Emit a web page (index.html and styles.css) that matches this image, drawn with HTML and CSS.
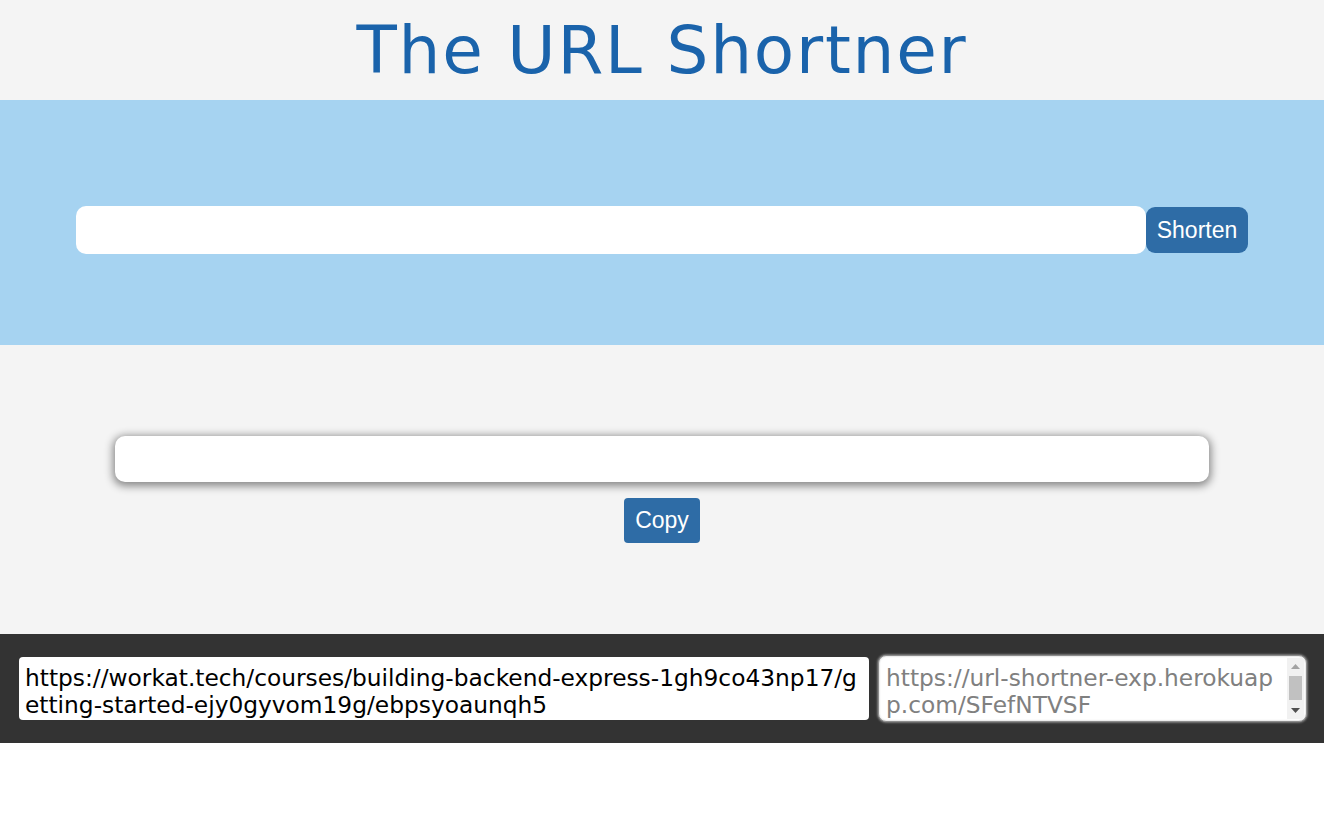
FILE: index.html
```html
<!DOCTYPE html>
<html>
<head>
<meta charset="utf-8">
<link rel="stylesheet" href="styles.css">
</head>
<body>
<header class="title-bar">
  <h1 class="title">The URL Shortner</h1>
</header>
<section class="shorten-section">
  <div class="shorten-row">
    <input class="url-input" type="text">
    <button class="btn btn-shorten">Shorten</button>
  </div>
</section>
<section class="result-section">
  <input class="result-input" type="text">
  <button class="btn btn-copy">Copy</button>
</section>
<footer class="history">
  <textarea class="hist-long">https://workat.tech/courses/building-backend-express-1gh9co43np17/getting-started-ejy0gyvom19g/ebpsyoaunqh5</textarea>
  <div class="hist-short">
    <div class="short-text">https://url-shortner-exp.herokuapp.com/SFefNTVSF</div>
    <div class="scrollbar">
      <div class="sb-btn"><svg width="9" height="5" viewBox="0 0 9 5"><polygon points="0,5 9,5 4.5,0" fill="#a3a3a3"/></svg></div>
      <div class="sb-track"><div class="sb-thumb"></div></div>
      <div class="sb-btn"><svg width="9" height="5" viewBox="0 0 9 5"><polygon points="0,0 9,0 4.5,5" fill="#505050"/></svg></div>
    </div>
  </div>
</footer>
</body>
</html>
```
FILE: styles.css
```css
html, body {
  margin: 0;
  padding: 0;
  background: #ffffff;
}
body {
  font-family: "DejaVu Sans", Verdana, sans-serif;
}
.title-bar {
  background: #f4f4f4;
  height: 100px;
  display: flex;
  justify-content: center;
  align-items: center;
}
.title {
  margin: 0;
  font-weight: normal;
  font-size: 66px;
  color: #1a63ab;
  font-family: "DejaVu Sans", Verdana, sans-serif;
  letter-spacing: 1.8px;
  line-height: 1;
  padding-top: 2px;
}
.shorten-section {
  background: #a6d3f1;
  height: 245px;
  display: flex;
  align-items: center;
  justify-content: center;
}
.shorten-row {
  display: flex;
  align-items: center;
  padding-top: 15px;
}
.url-input {
  width: 1070px;
  height: 48px;
  box-sizing: border-box;
  border: none;
  border-radius: 10px;
  background: #fff;
  outline: none;
  font-size: 18px;
  padding: 0 10px;
}
.btn {
  background: #2e6ca6;
  color: #fff;
  border: none;
  font-family: "Liberation Sans", Arial, sans-serif;
  font-size: 23px;
  cursor: pointer;
  padding: 0;
}
.btn-shorten {
  width: 102px;
  height: 46px;
  border-radius: 9px;
}
.result-section {
  background: #f4f4f4;
  height: 289px;
  display: flex;
  flex-direction: column;
  align-items: center;
  justify-content: flex-start;
  padding-top: 91px;
  box-sizing: border-box;
  gap: 16px;
}
.result-input {
  width: 1094px;
  height: 46px;
  box-sizing: border-box;
  border: none;
  border-radius: 10px;
  background: #fff;
  outline: none;
  box-shadow: 0 2px 8px 2px rgba(0,0,0,0.45);
}
.btn-copy {
  width: 76px;
  height: 45px;
  border-radius: 4px;
}
.history {
  background: #333333;
  height: 109px;
  display: flex;
  align-items: center;
  padding: 0 17px 0 19px;
  gap: 9px;
  box-sizing: border-box;
}
.hist-long {
  font-family: "DejaVu Sans", Verdana, sans-serif;
  font-size: 23.3px;
  line-height: 27px;
  resize: none;
  box-sizing: border-box;
  outline: none;
  word-break: break-all;
  width: 850px;
  height: 63px;
  border: none;
  border-radius: 4px;
  padding: 7px 6px 0;
  overflow: hidden;
  color: #000;
  background: #fff;
  margin: 0;
}
.hist-short {
  width: 429px;
  height: 67px;
  box-sizing: border-box;
  border: 1px solid #8c8c8c;
  border-radius: 8px;
  background: #fff;
  display: flex;
  padding: 2px 2px 2px 0;
  box-shadow: 0 0 2px 1px rgba(255,255,255,0.35), inset 0 0 2px rgba(0,0,0,0.3);
}
.short-text {
  flex: 1;
  font-family: "DejaVu Sans", Verdana, sans-serif;
  font-size: 23.3px;
  line-height: 27px;
  color: #808080;
  word-break: break-all;
  padding: 6px 0 0 7px;
  overflow: hidden;
}
.scrollbar {
  width: 17px;
  display: flex;
  flex-direction: column;
  background: #f1f1f1;
}
.sb-btn {
  height: 17px;
  display: flex;
  align-items: center;
  justify-content: center;
}
.sb-track {
  flex: 1;
  display: flex;
  flex-direction: column;
  padding: 1px 2px 2px;
}
.sb-thumb {
  flex: 1;
  background: #c1c1c1;
}
```
